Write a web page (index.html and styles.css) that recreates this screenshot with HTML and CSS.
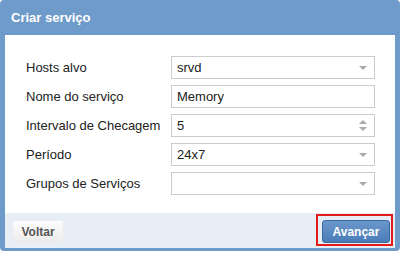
FILE: index.html
```html
<!DOCTYPE html>
<html>
<head>
  <title>Criar serviço</title>
  <link rel="stylesheet" href="styles.css">
</head>
<body>
  <div class="dialog">
    <div class="dialog-header">Criar serviço</div>

    <div class="dialog-body">
      <form class="service-form">
        <label>Hosts alvo</label>
        <div class="field select">srvd<span class="caret"></span></div>

        <label>Nome do serviço</label>
        <div class="field">Memory</div>

        <label>Intervalo de Checagem</label>
        <div class="field spinner">5
          <span class="spin"><span class="up"></span><span class="down"></span></span>
        </div>

        <label>Período</label>
        <div class="field select">24x7<span class="caret"></span></div>

        <label>Grupos de Serviços</label>
        <div class="field select"><span class="caret"></span></div>
      </form>
    </div>

    <div class="dialog-footer">
      <button class="back-button" type="button">Voltar</button>
      <span class="highlight">
        <button class="next-button" type="button">Avançar</button>
      </span>
    </div>
  </div>
</body>
</html>
```

FILE: styles.css
```css
body {
  font-family: 'Liberation Sans', Arial, sans-serif;
  background-color: #fff;
  margin: 0;
  padding: 0;
}

/* Dialog frame */
.dialog {
  width: 400px;
  height: 251px;
  box-sizing: border-box;
  background-color: #6f9bcb;
  padding: 0 5px 3px 5px;
  border-radius: 4px;
  display: flex;
  flex-direction: column;
}

.dialog-header {
  height: 35px;
  line-height: 36px;
  padding-left: 6px;
  color: #fff;
  font-size: 13px;
  font-weight: bold;
}

.dialog-body {
  flex: 1;
  background-color: #fff;
  padding: 21px 20px 0 21px;
}

.service-form {
  display: grid;
  grid-template-columns: 145px 204px;
  grid-auto-rows: 23px;
  row-gap: 6px;
  align-items: center;
}

label {
  font-size: 13px;
  color: #222;
}

.field {
  position: relative;
  height: 23px;
  box-sizing: border-box;
  border: 1px solid #ccc;
  padding-left: 5px;
  line-height: 21px;
  font-size: 13px;
  color: #222;
}

.caret {
  position: absolute;
  right: 7px;
  top: 9px;
  border-left: 4px solid transparent;
  border-right: 4px solid transparent;
  border-top: 4px solid #aaa;
}

.spin .up,
.spin .down {
  position: absolute;
  right: 7px;
  border-left: 4px solid transparent;
  border-right: 4px solid transparent;
}

.spin .up {
  top: 5px;
  border-bottom: 4px solid #aaa;
}

.spin .down {
  top: 12px;
  border-top: 4px solid #aaa;
}

/* Footer */
.dialog-footer {
  height: 35px;
  background-color: #e8eef6;
  display: flex;
  justify-content: space-between;
  align-items: flex-start;
  padding: 1px 2px 0 8px;
  box-sizing: border-box;
}

.back-button {
  margin-top: 7px;
  height: 22px;
  width: 50px;
  padding: 0;
  border: none;
  border-radius: 2px;
  background: linear-gradient(#fdfdfd, #eaeaea);
  color: #555;
  font-family: inherit;
  font-size: 12px;
  font-weight: bold;
}

.highlight {
  border: 2px solid #e21b1b;
  padding: 4px 1px 1px 4px;
  display: flex;
}

.next-button {
  height: 23px;
  width: 68px;
  padding: 0;
  border: 1px solid #3c68a0;
  border-radius: 3px;
  background: linear-gradient(#6a97cb, #4c7db8);
  color: #fff;
  font-family: inherit;
  font-size: 12px;
  font-weight: bold;
}
```
